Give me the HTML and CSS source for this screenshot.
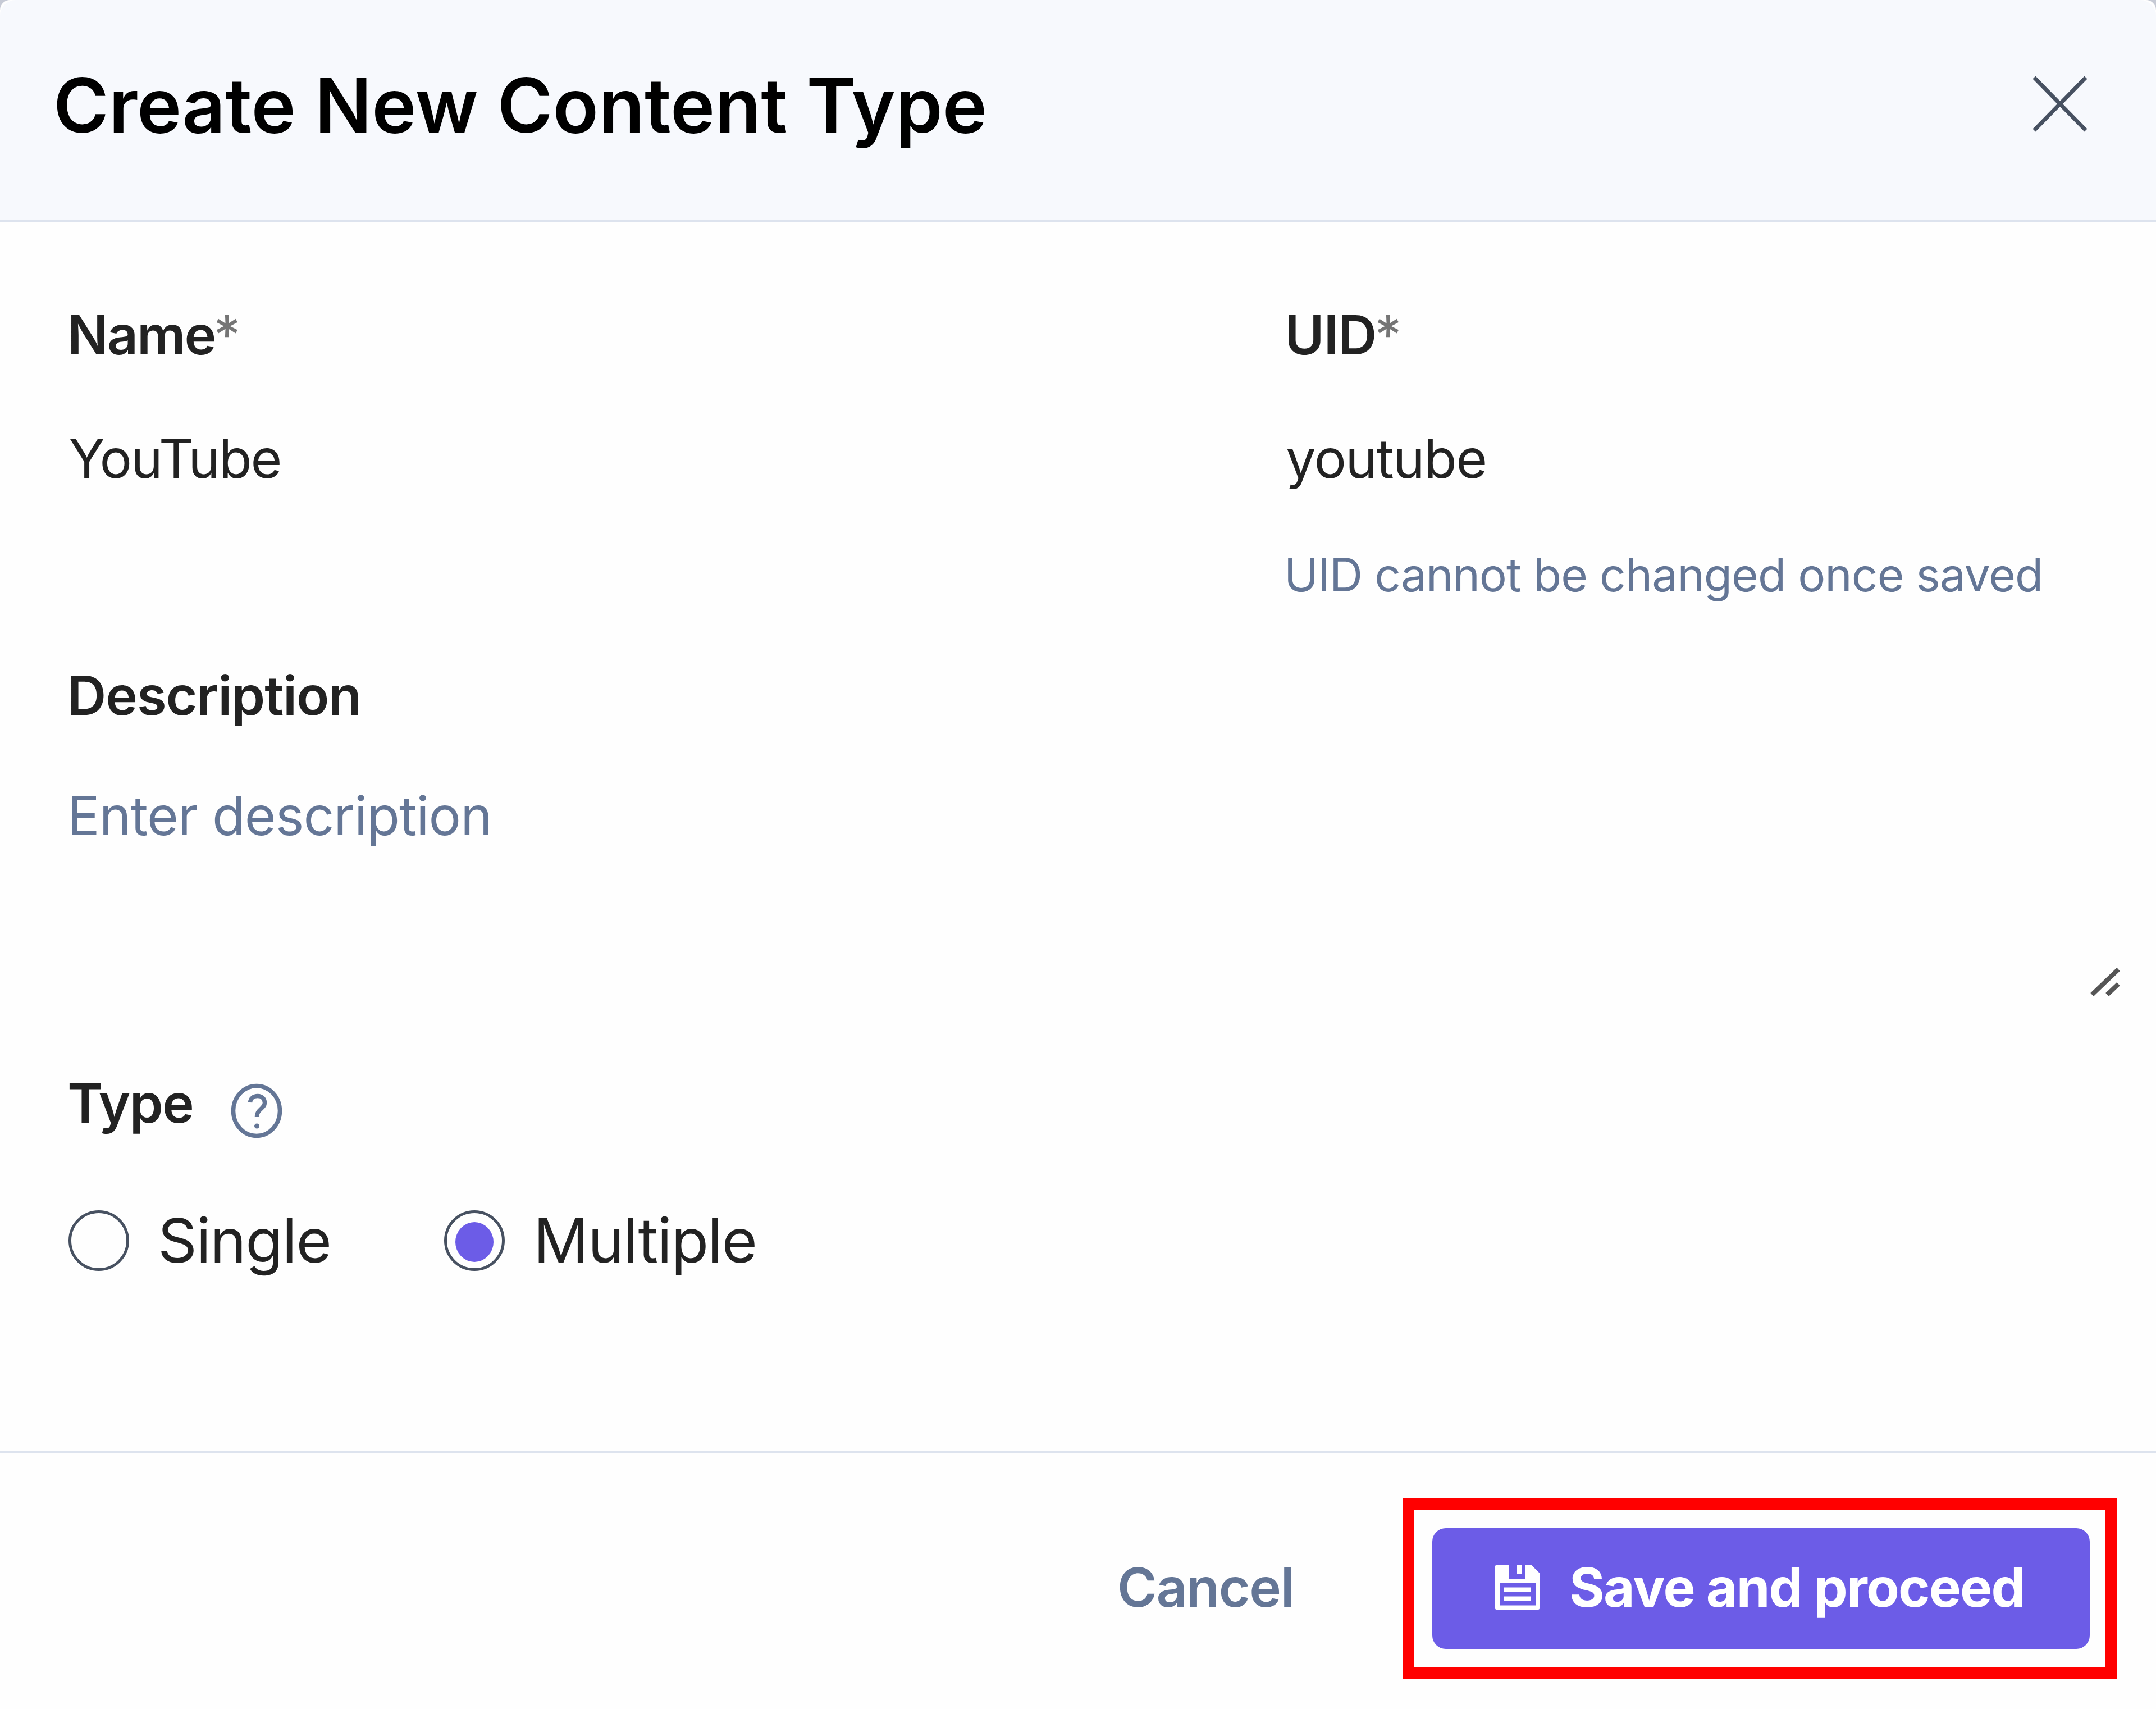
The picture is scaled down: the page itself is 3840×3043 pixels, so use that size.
FILE: index.html
```html
<!DOCTYPE html>
<html lang="en">
<head>
<meta charset="utf-8">
<title>Create New Content Type</title>
<link rel="stylesheet" href="styles.css">
</head>
<body>
<div class="modal">
  <header class="modal-header">
    <h1 class="title">Create New Content Type</h1>
    <svg class="close-icon" viewBox="0 0 98 102" role="img" aria-label="Close"><path d="M3 4L95 98M95 4L3 98"/></svg>
  </header>

  <main class="modal-body">
    <div class="row">
      <div class="field">
        <div class="label label-name">Name<span class="required">*</span></div>
        <div class="value value-name">YouTube</div>
      </div>
      <div class="field">
        <div class="label label-uid">UID<span class="required">*</span></div>
        <div class="value value-uid">youtube</div>
        <div class="hint">UID cannot be changed once saved</div>
      </div>
    </div>

    <div class="field description">
      <div class="label">Description</div>
      <div class="textarea">
        <span class="placeholder">Enter description</span>
        <svg class="resize-handle" viewBox="0 0 58 58"><path d="M6 51L53 6M33 51L53 32"/></svg>
      </div>
    </div>

    <div class="type-head">
      <div class="label">Type</div>
      <svg class="help-icon" viewBox="0 0 92 98">
        <ellipse cx="46" cy="49" rx="41.5" ry="44.5"/>
        <path d="M34.5 34C35 26.500 41 22.500 48 22.500C56 22.500 60.500 28 60.500 34.500C60.500 45 46.500 45.500 46.500 60"/>
        <circle class="help-dot" cx="46.500" cy="76" r="4.500"/>
      </svg>
    </div>

    <div class="radios">
      <div class="radio">
        <span class="radio-circle"></span>
        <span class="radio-text">Single</span>
      </div>
      <div class="radio">
        <span class="radio-circle checked"></span>
        <span class="radio-text">Multiple</span>
      </div>
    </div>
  </main>

  <footer class="modal-footer">
    <div class="cancel">Cancel</div>
    <div class="highlight">
      <div class="save">
        <svg class="save-icon" viewBox="0 0 83 82">
          <path fill-rule="evenodd" d="M7 1H26V26H56V1H66L82 17V76Q82 81.500 76 81.500H7Q1 81.500 1 76V7Q1 1 7 1ZM10 34V73.500H74V34Z"/>
          <path d="M41 1H50V18H41ZM17 41.500H66V49.500H17ZM17 57.500H66V65.500H17Z"/>
        </svg>
        <span class="save-text">Save and proceed</span>
      </div>
    </div>
  </footer>
</div>
</body>
</html>
```
FILE: styles.css
```css
* { box-sizing: border-box; }

body {
  margin: 0;
  background: #c6cad5;
  font-family: Inter, sans-serif;
  color: #222222;
}

.modal {
  display: flex;
  flex-direction: column;
  width: 3840px;
  height: 3043px;
  overflow: hidden;
  background: #fefefe;
  border-radius: 18px 18px 0 0;
}

.modal-header {
  display: flex;
  justify-content: space-between;
  align-items: center;
  height: 396px;
  padding: 0 122px 17px 95px;
  background: #f7f9fd;
  border-bottom: 5px solid #dde3ee;
  border-radius: 28px 28px 0 0;
}

.title {
  margin: 0;
  font-size: 134px;
  font-weight: 600;
  line-height: 160px;
  color: #000000;
}

.close-icon {
  width: 98px;
  height: 102px;
  margin-bottom: 5px;
  fill: none;
  stroke: #475161;
  stroke-width: 7;
}

.modal-body {
  flex: 1;
  padding: 140px 48px 0 120px;
}

.row {
  display: grid;
  grid-template-columns: 2166px 1fr;
}

.label {
  font-size: 96px;
  font-weight: 600;
  line-height: 120px;
  letter-spacing: -1.1px;
}

.label-name {
  letter-spacing: -2px;
}

.label-uid {
  padding-left: 2px;
}

.required {
  margin-left: -3px;
  font-weight: 400;
  color: #757575;
}

.value {
  margin-top: 100px;
  font-size: 96px;
  line-height: 120px;
}

.value-name {
  padding-left: 2px;
  letter-spacing: -2.2px;
}

.value-uid {
  padding-left: 4px;
  letter-spacing: -1.7px;
}

.hint {
  margin-top: 98px;
  padding-left: 1px;
  font-size: 82px;
  line-height: 100px;
  letter-spacing: -1px;
  color: #647696;
}

.description {
  margin-top: 104px;
}

.textarea {
  display: flex;
  justify-content: space-between;
  height: 388px;
  margin-top: 94px;
}

.placeholder {
  font-size: 96px;
  line-height: 120px;
  letter-spacing: -1px;
  color: #647696;
}

.resize-handle {
  align-self: flex-end;
  width: 58px;
  height: 58px;
  margin: 0 14px 2px 0;
  fill: none;
  stroke: #555555;
  stroke-width: 8;
}

.type-head {
  display: flex;
  height: 120px;
  margin-top: 124px;
}

.type-head .label {
  width: 291px;
  letter-spacing: -1.6px;
}

.help-icon {
  width: 92px;
  height: 98px;
  margin-top: 25px;
  fill: none;
  stroke: #647696;
  stroke-width: 7.5;
}

.help-dot {
  fill: #647696;
  stroke: none;
}

.radios {
  display: flex;
  margin: 131px 0 0 2px;
}

.radio {
  display: flex;
  align-items: center;
  gap: 51px;
  width: 669px;
  height: 108px;
}

.radio-circle {
  display: flex;
  align-items: center;
  justify-content: center;
  width: 108px;
  height: 108px;
  border: 5px solid #475161;
  border-radius: 50%;
}

.checked::before {
  content: "";
  width: 68px;
  height: 71px;
  margin-top: 4px;
  border-radius: 50%;
  background: #6c5ce7;
}

.radio-text {
  margin-top: -3px;
  font-size: 109px;
  line-height: 130px;
  letter-spacing: -1.5px;
}

.modal-footer {
  display: flex;
  justify-content: flex-end;
  height: 460px;
  padding: 80px 70px 0 0;
  border-top: 5px solid #dde3ee;
}

.cancel {
  width: 508px;
  font-size: 96px;
  font-weight: 600;
  line-height: 316px;
  letter-spacing: -1.3px;
  color: #647696;
}

.highlight {
  width: 1272px;
  height: 321px;
  padding: 33px 28px 33px 33px;
  border: 20px solid #ff0000;
}

.save {
  display: flex;
  align-items: center;
  gap: 51px;
  height: 215px;
  padding: 0 0 5px 110px;
  border-radius: 24px;
  background: #6c5ce7;
  color: #ffffff;
}

.save-icon {
  width: 83px;
  height: 82px;
  fill: #ffffff;
}

.save-text {
  font-size: 96px;
  font-weight: 700;
  line-height: 120px;
  letter-spacing: -1.8px;
  white-space: nowrap;
}
```
